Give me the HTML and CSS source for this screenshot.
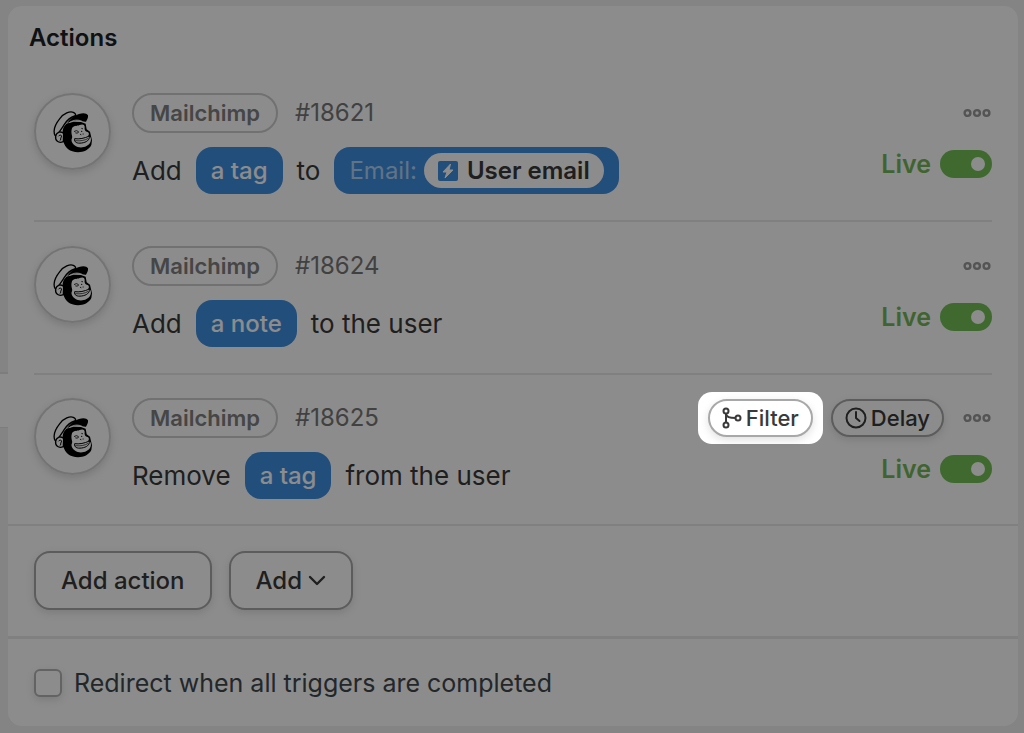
FILE: index.html
```html
<!DOCTYPE html>
<html lang="en">
<head>
  <meta charset="UTF-8" />
  <meta name="viewport" content="width=device-width, initial-scale=1.0"/>
  <title>Actions</title>
  <link rel="stylesheet" href="styles.css">
</head>
<body>

<!-- Shared icons -->
<svg class="sprite" aria-hidden="true">
  <symbol id="chimp" viewBox="0 0 120 126">
    <path d="M40 38C30 48 27 58 30 72C28 96 38 114 58 121C80 128 106 121 115 102L117 88L111 62L101 55L98 38L84 33L62 32Z" fill="#000"/>
    <path d="M57 52C62 43 70 47 78 43C88 39 94 40 95 47C94 54 95 59 101 62C108 63 110 70 105 75C114 76 116 85 112 94C106 107 88 112 74 108C60 103 52 90 57 82C60 75 52 68 57 52Z" fill="#fff"/>
    <path d="M6 73C-1 58 8 38 21 22C33 7 50 0 61 4C68 7 70 13 65 15C52 19 42 28 34 40C28 51 20 60 15 68C12 72 9 75 6 73Z" fill="#fff" stroke="#000" stroke-width="4"/>
    <path d="M42 38C48 26 62 15 78 9C90 5 101 6 105 13C106 20 103 26 99 32C90 33 82 26 70 28C58 29 50 32 42 38Z" fill="#000"/>
    <path d="M49 35C60 26 76 25 87 31" fill="none" stroke="#fff" stroke-width="2.400"/>
    <path d="M32 68C25 59 11 63 8 75C6 89 16 98 31 92Z" fill="#fff" stroke="#000" stroke-width="4"/>
    <path d="M16 76C20 70 28 72 25 78C21 82 26 87 20 89" fill="none" stroke="#000" stroke-width="3"/>
    <path d="M64 61Q70 56 76 61M68 66Q72 68 76 65M85 53Q86 50 89 53M82 70L84 71M90 69L91 69" fill="none" stroke="#000" stroke-width="2.400" stroke-linecap="round"/>
    <circle cx="86" cy="61" r="2" fill="#000"/>
    <path d="M65 83C78 85 95 82 109 75C111 87 100 94 86 96C72 98 63 94 65 83Z" fill="#fff" stroke="#000" stroke-width="3"/>
    <path d="M67 89C82 91 96 88 106 82" fill="none" stroke="#000" stroke-width="2"/>
  </symbol>
  <symbol id="dots" viewBox="0 0 28 10">
    <g fill="none" stroke="currentColor" stroke-width="2.4">
      <circle cx="4.5" cy="5" r="2.9"/>
      <circle cx="14" cy="5" r="2.9"/>
      <circle cx="23.5" cy="5" r="2.9"/>
    </g>
  </symbol>
</svg>

<div class="page">
  <div class="side">
    <div class="side-active"></div>
  </div>

  <main class="card">
    <h1 class="card-title">Actions</h1>

    <ul class="actions">
      <li class="action">
        <div class="logo"><svg width="40" height="42"><use href="#chimp"/></svg></div>
        <div class="info">
          <div class="meta"><span class="app">Mailchimp</span><span class="number">#18621</span></div>
          <div class="sentence">
            <span>Add</span>
            <button type="button" class="tag">a tag</button>
            <span>to</span>
            <button type="button" class="tag">
              <span class="tag-label">Email:</span>
              <span class="value">
                <svg width="20" height="20" viewBox="0 0 20 20"><rect width="20" height="20" rx="2" fill="#3f8fe2"/><path d="M12.500 3L5 11H9L7 17L15 9H11Z" fill="#fff" stroke="#fff" stroke-linejoin="round"/></svg>
                User email
              </span>
            </button>
          </div>
        </div>
        <div class="side-controls">
          <div class="tools">
            <button type="button" class="more" aria-label="More"><svg width="28" height="10"><use href="#dots"/></svg></button>
          </div>
          <label class="live">Live <input type="checkbox" class="toggle" checked></label>
        </div>
      </li>

      <li class="action">
        <div class="logo"><svg width="40" height="42"><use href="#chimp"/></svg></div>
        <div class="info">
          <div class="meta"><span class="app">Mailchimp</span><span class="number">#18624</span></div>
          <div class="sentence">
            <span>Add</span>
            <button type="button" class="tag">a note</button>
            <span>to the user</span>
          </div>
        </div>
        <div class="side-controls">
          <div class="tools">
            <button type="button" class="more" aria-label="More"><svg width="28" height="10"><use href="#dots"/></svg></button>
          </div>
          <label class="live">Live <input type="checkbox" class="toggle" checked></label>
        </div>
      </li>

      <li class="action">
        <div class="logo"><svg width="40" height="42"><use href="#chimp"/></svg></div>
        <div class="info">
          <div class="meta"><span class="app">Mailchimp</span><span class="number">#18625</span></div>
          <div class="sentence">
            <span>Remove</span>
            <button type="button" class="tag">a tag</button>
            <span>from the user</span>
          </div>
        </div>
        <div class="side-controls">
          <div class="tools">
            <div class="spotlight">
              <button type="button" class="pill">
                <svg width="20" height="22" viewBox="0 0 20 22" fill="none" stroke="currentColor" stroke-width="2">
                  <circle cx="4" cy="4" r="2.500"/>
                  <circle cx="4" cy="18" r="2.500"/>
                  <circle cx="16" cy="11" r="2.500"/>
                  <path d="M4 6.500V15.500M4 7C5 10 7 11 13.500 11"/>
                </svg>
                Filter
              </button>
            </div>
            <button type="button" class="pill">
              <svg width="22" height="22" viewBox="0 0 22 22" fill="none" stroke="currentColor" stroke-width="2" stroke-linecap="round" stroke-linejoin="round">
                <circle cx="11" cy="11" r="9.500"/>
                <path d="M11 5V11L14.500 14"/>
              </svg>
              Delay
            </button>
            <button type="button" class="more" aria-label="More"><svg width="28" height="10"><use href="#dots"/></svg></button>
          </div>
          <label class="live">Live <input type="checkbox" class="toggle" checked></label>
        </div>
      </li>
    </ul>

    <div class="buttons">
      <button type="button" class="btn">Add action</button>
      <button type="button" class="btn">Add
        <svg width="18" height="12" viewBox="0 0 18 12" fill="none" stroke="currentColor" stroke-width="2.400" stroke-linecap="round" stroke-linejoin="round"><path d="M2 2L9 9L16 2"/></svg>
      </button>
    </div>

    <div class="redirect">
      <input type="checkbox" id="redirect" class="checkbox">
      <label for="redirect">Redirect when all triggers are completed</label>
    </div>
  </main>
</div>

</body>
</html>
```

FILE: styles.css
```css
* {
  box-sizing: border-box;
}

body {
  margin: 0;
  min-height: 100vh;
  background: #f0f0f0;
  color: #3a3a3a;
  font-family: Inter, "Liberation Sans", sans-serif;
  font-size: 25px;
  line-height: 32px;
  overflow: hidden;
}

button {
  font: inherit;
  color: inherit;
  cursor: pointer;
}

.sprite {
  display: none;
}

.page {
  display: grid;
  grid-template-columns: 8px 1fr;
  padding-right: 6px;
}

.side {
  padding-top: 372px;
}

.side-active {
  height: 56px;
  background: #fff;
  border-top: 2px solid #e4e4e4;
  border-bottom: 1px solid #e4e4e4;
}

.card {
  margin: 6px 0;
  background: #fff;
  border-radius: 14px;
}

.card-title {
  margin: 0;
  padding: 16px 21px 15px;
  font-size: 24px;
  font-weight: 600;
  color: #1d2226;
}

.actions {
  list-style: none;
  margin: 0;
  padding: 0;
}

.action {
  display: flex;
  gap: 21px;
  margin: 0 26px;
  padding: 24px 0 26px;
  border-bottom: 2px solid #eaeaea;
}

.action:last-child {
  margin: 0;
  padding: 23px 26px 25px;
}

.logo {
  display: flex;
  align-items: center;
  justify-content: center;
  width: 77px;
  height: 77px;
  border: 2px solid #d4d4d4;
  border-radius: 50%;
  box-shadow: 0 3px 8px rgba(0,0,0,0.15);
}

.info {
  flex: 1;
}

.meta {
  display: flex;
  align-items: center;
  gap: 17px;
  height: 40px;
  margin-bottom: 14px;
  color: #777;
  font-size: 24px;
}

.app {
  height: 40px;
  padding: 2px 16px;
  border: 2px solid #cecece;
  border-radius: 20px;
  color: #808080;
  font-size: 22px;
  font-weight: 600;
}

.sentence {
  display: flex;
  align-items: center;
  gap: 14px;
  font-size: 26px;
}

.tag {
  display: flex;
  align-items: center;
  gap: 7px;
  height: 47px;
  padding: 0 15px;
  border: none;
  border-radius: 16px;
  background: #3f8fe2;
  color: #fff;
  font-size: 24px;
  font-weight: 500;
}

.tag-label {
  color: #b2d2f4;
  font-weight: 400;
}

.value {
  display: flex;
  align-items: center;
  gap: 9px;
  height: 35px;
  padding: 0 14px;
  border-radius: 18px;
  background: #fff;
  color: #3a3a3a;
  font-weight: 600;
}

.side-controls {
  display: flex;
  flex-direction: column;
  align-items: flex-end;
  gap: 15px;
}

.tools {
  display: flex;
  align-items: center;
  gap: 18px;
  height: 40px;
}

.more {
  display: flex;
  padding: 0 1px;
  border: none;
  background: none;
  color: #999;
}

.pill {
  display: flex;
  align-items: center;
  gap: 4px;
  height: 38px;
  padding: 0 12px;
  border: 2px solid #a8a8a8;
  border-radius: 19px;
  background: #fff;
  box-shadow: 0 3px 8px rgba(0,0,0,0.12);
  font-size: 22px;
  font-weight: 500;
}

/* Dims everything on the page except the button inside */
.spotlight {
  position: relative;
}

.spotlight::after {
  content: "";
  position: absolute;
  inset: -7px -10px;
  border-radius: 14px;
  box-shadow: 0 0 0 200vmax rgba(0,0,0,0.45);
  pointer-events: none;
  z-index: 1;
}

.live {
  display: flex;
  align-items: center;
  gap: 9px;
  color: #75b758;
  font-weight: 600;
}

.toggle {
  appearance: none;
  display: flex;
  align-items: center;
  justify-content: flex-end;
  width: 52px;
  height: 28px;
  margin: 0;
  padding: 0 7px;
  border-radius: 14px;
  background: #75bf58;
}

.toggle::before {
  content: "";
  width: 14px;
  height: 14px;
  border-radius: 50%;
  background: #fff;
}

.toggle:not(:checked) {
  justify-content: flex-start;
  background: #ccc;
}

.buttons {
  display: flex;
  gap: 17px;
  padding: 25px 26px 26px;
  border-bottom: 3px solid #eaeaea;
}

.btn {
  display: flex;
  align-items: center;
  gap: 6px;
  height: 59px;
  padding: 0 25px;
  border: 2px solid #a8a8a8;
  border-radius: 16px;
  background: #fff;
  box-shadow: 0 3px 8px rgba(0,0,0,0.12);
  font-size: 24px;
  font-weight: 500;
}

.redirect {
  display: flex;
  align-items: center;
  gap: 12px;
  padding: 28px 26px 27px;
  color: #40484e;
}

.checkbox {
  appearance: none;
  width: 28px;
  height: 28px;
  margin: 0;
  border: 2px solid #b4b4b4;
  border-radius: 6px;
  background: #fff;
  box-shadow: 0 3px 8px rgba(0,0,0,0.12);
}

.checkbox:checked {
  background: #3f8fe2;
}
```
